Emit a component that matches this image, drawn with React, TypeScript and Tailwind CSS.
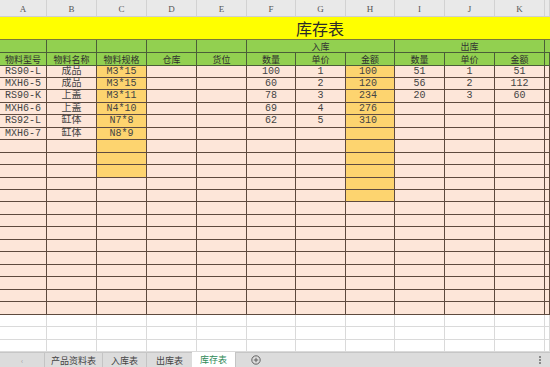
import React from "react";

const W = [
  "w-[47px]",
  "w-[50px]",
  "w-[50px]",
  "w-[50px]",
  "w-[50px]",
  "w-[49px]",
  "w-[50px]",
  "w-[49px]",
  "w-[50px]",
  "w-[50px]",
  "w-[50px]",
  "flex-1",
];

const LETTERS = ["A", "B", "C", "D", "E", "F", "G", "H", "I", "J", "K", ""];

const HEAD = ["物料型号", "物料名称", "物料规格", "仓库", "货位", "数量", "单价", "金额", "数量", "单价", "金额", ""];

const DATA: string[][] = [
  ["RS90-L", "成品", "M3*15", "", "", "100", "1", "100", "51", "1", "51"],
  ["MXH6-5", "成品", "M3*15", "", "", "60", "2", "120", "56", "2", "112"],
  ["RS90-K", "上盖", "M3*11", "", "", "78", "3", "234", "20", "3", "60"],
  ["MXH6-6", "上盖", "N4*10", "", "", "69", "4", "276", "", "", ""],
  ["RS92-L", "缸体", "N7*8", "", "", "62", "5", "310", "", "", ""],
  ["MXH6-7", "缸体", "N8*9", "", "", "", "", "", "", "", ""],
];

const H = [
  "h-[12px]", "h-[12px]", "h-[13px]", "h-[12px]", "h-[13px]", "h-[12px]", "h-[13px]", "h-[12px]", "h-[13px]", "h-[12px]",
  "h-[12px]", "h-[13px]", "h-[12px]", "h-[13px]", "h-[12px]", "h-[13px]", "h-[12px]", "h-[13px]", "h-[12px]", "h-[13px]",
];

const cjk = "font-['Noto_Sans_CJK_SC',sans-serif]";
const mono = "font-['Liberation_Mono','Noto_Sans_CJK_SC',monospace]";

function DataRow({ r }: { r: number }) {
  const row = DATA[r] || [];
  return (
    <div className={`flex ${H[r]}`}>
      {W.map((w, c) => {
        const orange = (c === 2 && r < 9) || (c === 7 && r < 11);
        const bg = orange ? "bg-[#fdd46f]" : "bg-[#fde6d9]";
        const txt = row[c] || "";
        const align = c === 7 ? "justify-start pl-[13px]" : "justify-center";
        return (
          <div
            key={c}
            className={`${w} ${bg} ${align} flex items-center border-b border-r border-[#5e4a3e] text-[10px] leading-none text-[#444] ${mono}`}
          >
            {txt}
          </div>
        );
      })}
    </div>
  );
}

function WhiteRow({ h }: { h: string }) {
  return (
    <div className={`flex ${h}`}>
      {W.map((w, c) => (
        <div key={c} className={`${w} bg-white border-b border-r border-[#dadada]`} />
      ))}
    </div>
  );
}

export default function App() {
  return (
    <div className="w-[550px] h-[367px] overflow-hidden bg-white flex flex-col">
      {/* column letters */}
      <div className="flex h-[17px] bg-[#e9e9e9] border-b border-[#cfcfcf]">
        {W.map((w, c) => (
          <div
            key={c}
            className={`${w} flex items-end justify-center pb-[2px] border-r border-[#d2d2d2] text-[9px] leading-none text-[#555] font-['Liberation_Serif',serif]`}
          >
            {LETTERS[c]}
          </div>
        ))}
      </div>

      {/* title */}
      <div className="h-[23px] bg-[#ffff00] flex items-center border-b border-[#7a7a3a]">
        <div className="w-[640px] shrink-0 flex justify-center">
          <span className={`text-[16px] leading-none text-[#2a2a2a] ${cjk}`}>库存表</span>
        </div>
      </div>

      {/* group header */}
      <div className="flex h-[13px] bg-[#92d050]">
        {[0, 1, 2, 3, 4].map((c) => (
          <div key={c} className={`${W[c]} border-b border-r border-[#4b5e38]`} />
        ))}
        <div className={`w-[148px] flex items-center justify-center border-b border-r border-[#4b5e38] text-[9px] leading-none text-[#333] ${cjk}`}>
          入库
        </div>
        <div className={`w-[150px] flex items-center justify-center border-b border-r border-[#4b5e38] text-[9px] leading-none text-[#333] ${cjk}`}>
          出库
        </div>
        <div className="flex-1 border-b border-[#4b5e38]" />
      </div>

      {/* field header */}
      <div className="flex h-[13px] bg-[#92d050]">
        {W.map((w, c) => (
          <div
            key={c}
            className={`${w} flex items-center justify-center border-b border-r border-[#4b5e38] text-[9px] leading-none text-[#2e2e2e] ${cjk}`}
          >
            {HEAD[c]}
          </div>
        ))}
      </div>

      {/* data rows */}
      {H.map((_, r) => (
        <DataRow key={r} r={r} />
      ))}

      <WhiteRow h="h-[12px]" />
      <WhiteRow h="h-[13px]" />
      <WhiteRow h="h-[12px]" />

      {/* sheet tabs */}
      <div className={`flex h-[15px] bg-[#dcdcdc] border-t border-[#c6c6c6] text-[9px] leading-none text-[#444] ${cjk}`}>
        <div className="w-[45px] flex items-center justify-center border-r border-[#c4c4c4] text-[#999] text-[7px]">‹</div>
        <div className="w-[58px] flex items-center justify-center border-r border-[#c4c4c4]">产品资料表</div>
        <div className="w-[44px] flex items-center justify-center border-r border-[#c4c4c4]">入库表</div>
        <div className="w-[45px] flex items-center justify-center">出库表</div>
        <div className="w-[43px] flex items-center justify-center bg-white text-[#2f8a57] -mt-px">库存表</div>
        <div className="w-[40px] flex items-center justify-center border-l border-[#c4c4c4]">
          <svg width="10" height="10" viewBox="0 0 10 10">
            <circle cx="5" cy="5" r="4.2" fill="none" stroke="#555" strokeWidth="0.9" />
            <path d="M5 2.8V7.2M2.8 5H7.2" stroke="#555" strokeWidth="0.9" />
          </svg>
        </div>
        <div className="flex-1 flex items-center justify-end pr-[9px]">
          <div className="flex flex-col gap-[1px]">
            <div className="w-[2px] h-[2px] bg-[#888]" />
            <div className="w-[2px] h-[2px] bg-[#888]" />
            <div className="w-[2px] h-[2px] bg-[#888]" />
          </div>
        </div>
      </div>
    </div>
  );
}
